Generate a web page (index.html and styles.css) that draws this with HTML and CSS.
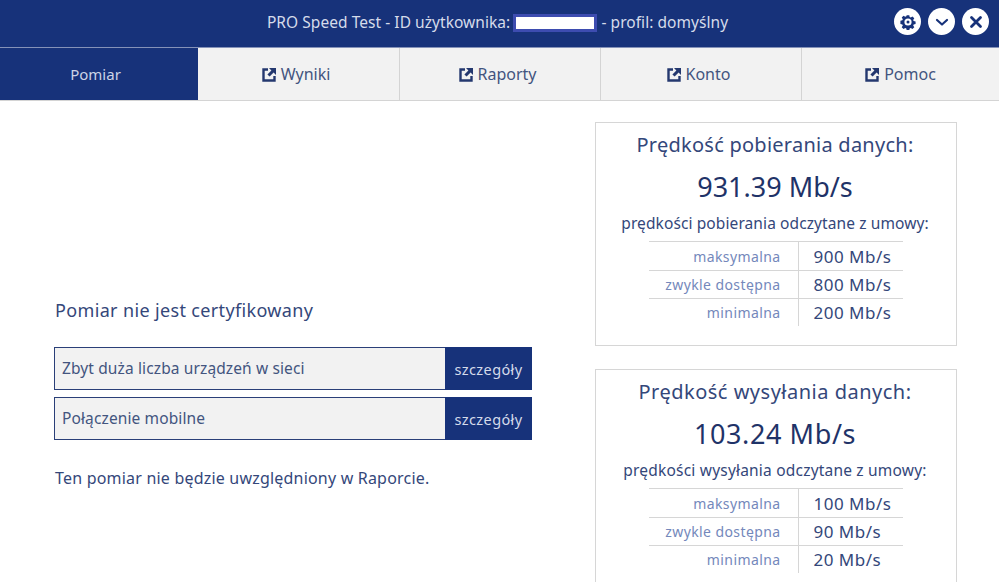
FILE: index.html
```html
<!DOCTYPE html>
<html lang="pl">

<head>
    <meta charset="utf-8">
    <meta name="viewport" content="width=device-width, initial-scale=1.0">
    <title>PRO Speed Test</title>
    <link rel="stylesheet" href="styles.css">
</head>

<body>
    <header class="topbar">
        <p class="topbar-title">PRO Speed Test - ID użytkownika: <span class="user-id"></span> - profil: domyślny</p>
        <div class="topbar-buttons">
            <button class="round-btn" aria-label="Ustawienia">
                <svg width="16" height="16" viewBox="0 0 16 16">
                    <path d="M6.6 0.6h2.8l.4 2.1 1.2.5 1.8-1.2 2 2-1.2 1.8.5 1.2 2.1.4v2.8l-2.1.4-.5 1.2 1.2 1.8-2 2-1.8-1.2-1.2.5-.4 2.1H6.6l-.4-2.1-1.2-.5-1.8 1.2-2-2 1.2-1.8-.5-1.2-2.1-.4V6.6l2.1-.4.5-1.2-1.2-1.8 2-2 1.8 1.2 1.2-.5z" transform="translate(.6 .6) scale(.925)" fill="#17327a"/>
                    <circle cx="8" cy="8" r="3.6" fill="#fff"/>
                    <circle cx="8" cy="8" r="1.5" fill="#17327a"/>
                </svg>
            </button>
            <button class="round-btn" aria-label="Zwiń">
                <svg width="14" height="14" viewBox="0 0 14 14">
                    <path d="M2 5l5 4.5L12 5" fill="none" stroke="#17327a" stroke-width="2.2" stroke-linecap="round" stroke-linejoin="round"/>
                </svg>
            </button>
            <button class="round-btn" aria-label="Zamknij">
                <svg width="14" height="14" viewBox="0 0 14 14">
                    <path d="M2.5 2.5l9 9M11.5 2.5l-9 9" fill="none" stroke="#17327a" stroke-width="2.8" stroke-linecap="round"/>
                </svg>
            </button>
        </div>
    </header>

    <nav class="tabs">
        <a class="tab active">Pomiar</a>
        <a class="tab"><svg class="ext" width="15" height="15" viewBox="0 0 15 15"><path d="M6 2.5H1.5v11h11V9" fill="none" stroke="#24386f" stroke-width="2.4"/><path d="M7 1h7v7l-2.4-2.4-4 4-2.2-2.2 4-4z" fill="#24386f"/></svg>Wyniki</a>
        <a class="tab"><svg class="ext" width="15" height="15" viewBox="0 0 15 15"><path d="M6 2.5H1.5v11h11V9" fill="none" stroke="#24386f" stroke-width="2.4"/><path d="M7 1h7v7l-2.4-2.4-4 4-2.2-2.2 4-4z" fill="#24386f"/></svg>Raporty</a>
        <a class="tab"><svg class="ext" width="15" height="15" viewBox="0 0 15 15"><path d="M6 2.5H1.5v11h11V9" fill="none" stroke="#24386f" stroke-width="2.4"/><path d="M7 1h7v7l-2.4-2.4-4 4-2.2-2.2 4-4z" fill="#24386f"/></svg>Konto</a>
        <a class="tab"><svg class="ext" width="15" height="15" viewBox="0 0 15 15"><path d="M6 2.5H1.5v11h11V9" fill="none" stroke="#24386f" stroke-width="2.4"/><path d="M7 1h7v7l-2.4-2.4-4 4-2.2-2.2 4-4z" fill="#24386f"/></svg>Pomoc</a>
    </nav>

    <main class="content">
        <section class="left">
            <h2 class="cert-title">Pomiar nie jest certyfikowany</h2>
            <div class="issue">
                <span class="issue-text">Zbyt duża liczba urządzeń w sieci</span>
                <button class="issue-btn">szczegóły</button>
            </div>
            <div class="issue">
                <span class="issue-text">Połączenie mobilne</span>
                <button class="issue-btn">szczegóły</button>
            </div>
            <p class="note">Ten pomiar nie będzie uwzględniony w Raporcie.</p>
        </section>

        <section class="right">
            <article class="card">
                <h3 class="card-title">Prędkość pobierania danych:</h3>
                <div class="speed">931.39 Mb/s</div>
                <p class="card-sub">prędkości pobierania odczytane z umowy:</p>
                <table class="limits">
                    <tr><td class="lab">maksymalna</td><td class="val">900 Mb/s</td></tr>
                    <tr><td class="lab">zwykle dostępna</td><td class="val">800 Mb/s</td></tr>
                    <tr><td class="lab">minimalna</td><td class="val">200 Mb/s</td></tr>
                </table>
            </article>
            <article class="card card-upload">
                <h3 class="card-title">Prędkość wysyłania danych:</h3>
                <div class="speed">103.24 Mb/s</div>
                <p class="card-sub">prędkości wysyłania odczytane z umowy:</p>
                <table class="limits">
                    <tr><td class="lab">maksymalna</td><td class="val">100 Mb/s</td></tr>
                    <tr><td class="lab">zwykle dostępna</td><td class="val">90 Mb/s</td></tr>
                    <tr><td class="lab">minimalna</td><td class="val">20 Mb/s</td></tr>
                </table>
            </article>
        </section>
    </main>
</body>

</html>
```

FILE: styles.css
```css
* {
    margin: 0;
    padding: 0;
    box-sizing: border-box;
}

html,
body {
    height: 582px;
    overflow: hidden;
}

body {
    font-family: "Noto Sans", sans-serif;
    color: #34477a;
    background-color: #fff;
}

.topbar {
    height: 48px;
    background-color: #17327a;
    border-bottom: 1px solid #8592b8;
    position: relative;
    display: flex;
    align-items: center;
    justify-content: center;
    padding: 0 4px 3px 0;
}

.topbar-title {
    color: #d5dbea;
    font-size: 15.5px;
    letter-spacing: 0.05px;
    white-space: nowrap;
}

.user-id {
    display: inline-block;
    width: 84px;
    height: 18px;
    margin-left: -1px;
    background-color: #fff;
    border: 3px solid #3d4cb0;
    vertical-align: -4px;
}

.topbar-buttons {
    position: absolute;
    right: 10px;
    top: 8px;
    display: flex;
    gap: 7px;
}

.round-btn {
    width: 27px;
    height: 27px;
    border: none;
    border-radius: 50%;
    background-color: #fff;
    display: flex;
    align-items: center;
    justify-content: center;
}

.tabs {
    display: grid;
    grid-template-columns: 198px 202px 201px 201px 197px;
    height: 53px;
    background-color: #f2f2f2;
    border-bottom: 1px solid #d4d4d4;
}

.tab {
    display: flex;
    align-items: center;
    justify-content: center;
    gap: 4px;
    padding-right: 5px;
    font-size: 16px;
    color: #43557f;
    border-right: 1px solid #d4d4d4;
}

.tab:last-child {
    border-right: none;
    padding-right: 0;
}

.tab.active {
    background-color: #17327a;
    color: #ccd4e6;
    border-right: none;
    font-size: 15px;
    padding-right: 7px;
}

.content {
    display: flex;
    justify-content: space-between;
    padding: 21px 42px 0 54px;
}

.left {
    width: 478px;
    padding-top: 176px;
}

.cert-title {
    font-size: 18px;
    font-weight: 400;
    line-height: 24px;
    letter-spacing: 0.35px;
    margin: 0 0 25px 1px;
}

.issue {
    display: flex;
    height: 43px;
    margin-bottom: 7px;
    background-color: #f2f2f2;
    border: 1px solid #2a3f78;
}

.issue-text {
    flex: 1;
    align-self: center;
    padding: 0 0 2px 7px;
    font-size: 15.5px;
    letter-spacing: 0.12px;
    color: #43557f;
}

.issue-btn {
    width: 87px;
    margin: -1px -1px -1px 0;
    border: none;
    background-color: #17327a;
    color: #d5dbea;
    font-family: inherit;
    font-size: 14.5px;
    letter-spacing: 0.4px;
}

.note {
    margin: 27px 0 0 1px;
    font-size: 16px;
    letter-spacing: 0.2px;
    line-height: 22px;
}

.right {
    width: 362px;
    display: flex;
    flex-direction: column;
    gap: 23px;
}

.card {
    height: 224px;
    flex-shrink: 0;
    border: 1px solid #d6d6d6;
    text-align: center;
    padding: 8px 2px 0 0;
}

.card-title {
    font-size: 20px;
    font-weight: 400;
    letter-spacing: 0.25px;
    line-height: 28px;
}

.speed {
    font-size: 27px;
    line-height: 38px;
    margin-top: 9px;
    color: #1f3368;
}

.card-sub {
    font-size: 15.5px;
    letter-spacing: 0.1px;
    line-height: 22px;
    margin-top: 6px;
    margin-bottom: 7px;
}

.card-upload .card-title {
    letter-spacing: 0.5px;
}

.card-upload .speed {
    letter-spacing: 0.6px;
}

.card-upload .card-sub {
    letter-spacing: 0.2px;
}

.limits {
    width: 254px;
    margin: 0 auto;
    border-collapse: collapse;
    border-top: 1px solid #d6d6d6;
    position: relative;
    left: 1px;
}

.limits tr + tr td {
    border-top: 1px solid #d6d6d6;
}

.limits td {
    height: 28px;
}

.limits tr:first-child td {
    height: 29px;
}

.limits tr:last-child td {
    height: 27px;
}

.lab {
    width: 149px;
    text-align: right;
    padding-right: 17px;
    font-size: 14px;
    letter-spacing: 0.4px;
    color: #7488bb;
    border-right: 1px solid #d6d6d6;
}

.val {
    text-align: left;
    padding-left: 15px;
    font-size: 17px;
    letter-spacing: 0.5px;
}
```
